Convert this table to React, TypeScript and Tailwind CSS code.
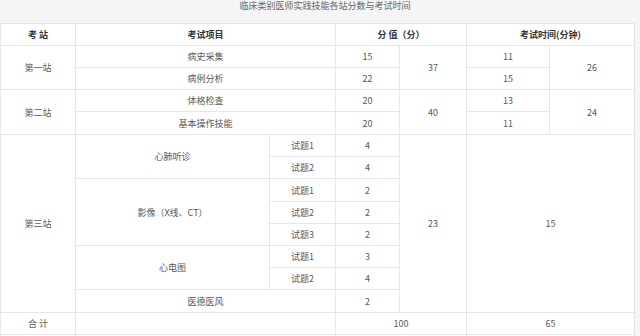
import React from "react";

const font = { fontFamily: '"Noto Sans CJK SC", "Noto Sans", sans-serif' };

function C({ cls, children, bold }: { cls: string; children?: React.ReactNode; bold?: boolean }) {
  return (
    <div
      className={`bg-white flex items-center justify-center text-[9px] leading-none ${
        bold ? "font-bold text-[#333]" : "text-[#595959]"
      } ${cls}`}
    >
      {children}
    </div>
  );
}

export default function App() {
  return (
    <div className="w-[640px] h-[336px] overflow-hidden bg-[#f5f5f5]" style={font}>
      <div className="h-[23px] pl-[10px] text-center text-[9px] leading-[12px] text-[#666]">
        临床类别医师实践技能各站分数与考试时间
      </div>
      <div className="grid w-[635px] bg-[#e6e6e6] gap-px p-px grid-cols-[74px_193px_65px_63px_66px_82px_84px] grid-rows-[21px_21px_21px_21px_22px_21px_21px_22px_21px_21px_21px_21px_22px_21px_21px]">
        <C bold cls="col-start-1 row-start-1">考 站</C>
        <C bold cls="col-start-2 col-span-2 row-start-1">考试项目</C>
        <C bold cls="col-start-4 col-span-2 row-start-1">分 值（分）</C>
        <C bold cls="col-start-6 col-span-2 row-start-1">考试时间(分钟)</C>

        <C cls="col-start-1 row-start-2 row-span-2">第一站</C>
        <C cls="col-start-2 col-span-2 row-start-2">病史采集</C>
        <C cls="col-start-4 row-start-2">15</C>
        <C cls="col-start-5 row-start-2 row-span-2">37</C>
        <C cls="col-start-6 row-start-2">11</C>
        <C cls="col-start-7 row-start-2 row-span-2">26</C>
        <C cls="col-start-2 col-span-2 row-start-3">病例分析</C>
        <C cls="col-start-4 row-start-3">22</C>
        <C cls="col-start-6 row-start-3">15</C>

        <C cls="col-start-1 row-start-4 row-span-2">第二站</C>
        <C cls="col-start-2 col-span-2 row-start-4">体格检查</C>
        <C cls="col-start-4 row-start-4">20</C>
        <C cls="col-start-5 row-start-4 row-span-2">40</C>
        <C cls="col-start-6 row-start-4">13</C>
        <C cls="col-start-7 row-start-4 row-span-2">24</C>
        <C cls="col-start-2 col-span-2 row-start-5">基本操作技能</C>
        <C cls="col-start-4 row-start-5">20</C>
        <C cls="col-start-6 row-start-5">11</C>

        <C cls="col-start-1 row-start-6 row-span-8">第三站</C>
        <C cls="col-start-2 row-start-6 row-span-2">心肺听诊</C>
        <C cls="col-start-3 row-start-6">试题1</C>
        <C cls="col-start-4 row-start-6">4</C>
        <C cls="col-start-5 row-start-6 row-span-8">23</C>
        <C cls="col-start-6 col-span-2 row-start-6 row-span-8">15</C>
        <C cls="col-start-3 row-start-7">试题2</C>
        <C cls="col-start-4 row-start-7">4</C>

        <C cls="col-start-2 row-start-8 row-span-3">影像（X线、CT）</C>
        <C cls="col-start-3 row-start-8">试题1</C>
        <C cls="col-start-4 row-start-8">2</C>
        <C cls="col-start-3 row-start-9">试题2</C>
        <C cls="col-start-4 row-start-9">2</C>
        <C cls="col-start-3 row-start-10">试题3</C>
        <C cls="col-start-4 row-start-10">2</C>

        <C cls="col-start-2 row-start-11 row-span-2">心电图</C>
        <C cls="col-start-3 row-start-11">试题1</C>
        <C cls="col-start-4 row-start-11">3</C>
        <C cls="col-start-3 row-start-12">试题2</C>
        <C cls="col-start-4 row-start-12">4</C>

        <C cls="col-start-2 col-span-2 row-start-13">医德医风</C>
        <C cls="col-start-4 row-start-13">2</C>

        <C cls="col-start-1 row-start-14">合 计</C>
        <C cls="col-start-2 col-span-2 row-start-14"></C>
        <C cls="col-start-4 col-span-2 row-start-14">100</C>
        <C cls="col-start-6 col-span-2 row-start-14">65</C>

        <C cls="col-start-1 row-start-15"></C>
        <C cls="col-start-2 col-span-2 row-start-15"></C>
        <C cls="col-start-4 col-span-2 row-start-15"></C>
        <C cls="col-start-6 col-span-2 row-start-15"></C>
      </div>
    </div>
  );
}
